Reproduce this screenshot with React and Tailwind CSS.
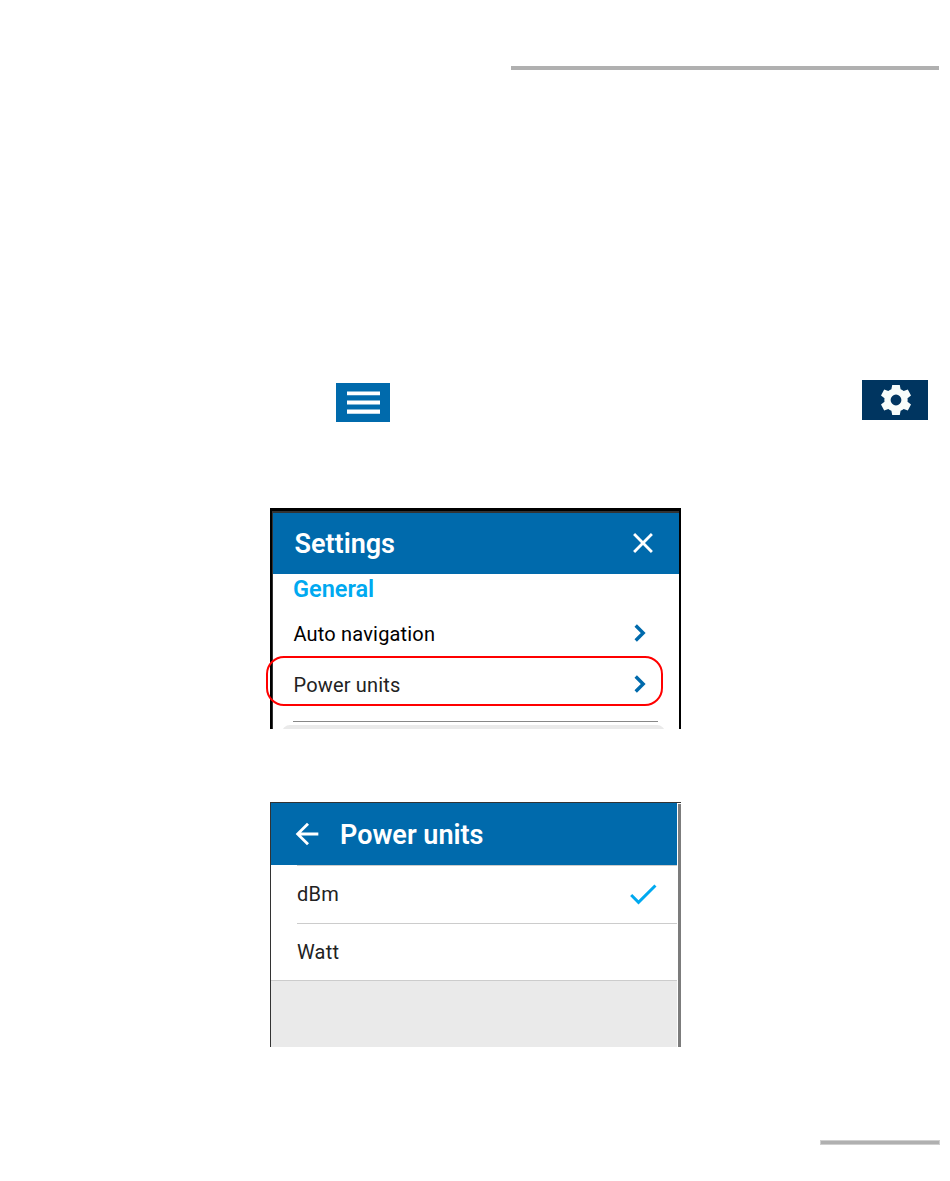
import { MdArrowBack, MdCheck, MdClose } from 'react-icons/md';

function MenuButton() {
  return (
    <button className="flex h-[39px] w-[54px] items-center justify-center bg-[#006aac]" aria-label="Menu">
      <svg className="h-[23px] w-[33px]" viewBox="0 0 33 23" fill="#fff">
        <path d="M0 .5h33v3.8H0zM0 9.6h33v3.8H0zM0 18.4h33v4.4H0z" />
      </svg>
    </button>
  );
}

function GearIcon() {
  return (
    <svg className="ml-px h-[30px] w-[30px]" viewBox="-15 -15 30 30" fill="currentColor">
      <path
        fillRule="evenodd"
        d="M-3.8 -15H3.8L4.6 -10.7Q6.3 -10 7.7 -8.9L11.8 -10.5L15 -4.6L11.5 -1.8Q11.8 0 11.5 1.8L15 4.6L11.8 10.5L7.7 8.9Q6.3 10 4.6 10.7L3.8 15H-3.8L-4.6 10.7Q-6.3 10 -7.7 8.9L-11.8 10.5L-15 4.6L-11.5 1.8Q-11.8 0 -11.5 -1.8L-15 -4.6L-11.8 -10.5L-7.7 -8.9Q-6.3 -10 -4.6 -10.7ZM0 -5.4A5.4 5.4 0 1 0 0 5.4A5.4 5.4 0 1 0 0 -5.4Z"
      />
    </svg>
  );
}

function ChevronIcon() {
  return (
    <svg className="mr-[11px] mb-[2px] h-[18px] w-3" viewBox="0 0 12 18" fill="none" stroke="#006aac" strokeWidth="3.4">
      <path d="M1.7 1.5 9.2 9l-7.5 7.5" />
    </svg>
  );
}

function SettingsRow({ label, className }) {
  return (
    <div className={`flex items-center justify-between ${className}`}>
      <span>{label}</span>
      <ChevronIcon />
    </div>
  );
}

function SettingsPanel() {
  return (
    <section className="relative ml-[270px] mt-[86px] h-[221px] w-[411px] border-x-2 border-t-3 border-black">
      <div className="h-full overflow-hidden border-l border-t-2 border-[#333]">
        <header className="flex h-[61px] items-center justify-between bg-[#006aac] pl-[21.5px] pr-[19.5px] text-white">
          <h1 className="text-[27px] font-semibold leading-8">Settings</h1>
          <MdClose className="mb-px h-[34px] w-[34px]" />
        </header>
        <h2 className="pl-5 text-[23.5px] font-semibold leading-[30px] text-[#00a9f0]">General</h2>
        <div className="pl-[20.5px] pr-[22px] text-[20px] tracking-[0.18px]">
          <SettingsRow label="Auto navigation" className="h-[60px] text-black" />
          <SettingsRow label="Power units" className="h-[42px] text-[#222]" />
        </div>
        <div className="ml-5 mt-[15px] h-px w-[365px] bg-[#888]"></div>
        <div className="ml-[9px] mt-[3px] h-3 w-[383px] rounded-t-[8px] bg-[#eaeaea]"></div>
      </div>
      {/* callout around the selected row */}
      <div className="absolute -left-[6px] top-[145px] h-[50px] w-[397px] rounded-[18px] border-2 border-[#f00]"></div>
    </section>
  );
}

function PowerUnitsPanel() {
  return (
    <section className="ml-[270px] mt-[73px] h-[245px] w-[411px] border-l border-t border-[#333]">
      <div className="flex h-full">
        <div className="flex w-[406px] flex-col">
          <header className="flex h-[62px] shrink-0 items-center bg-[#006aac] pl-[19px] text-white">
            <MdArrowBack className="h-[34px] w-[34px]" />
            <h1 className="ml-[16px] pt-[2px] text-[27px] font-semibold leading-8">Power units</h1>
          </header>
          <ul className="pl-[26px] text-[20px] tracking-[0.2px] text-[#222]">
            <li className="flex h-[58px] items-center justify-between border-t border-[#ccc] pr-[16px] pb-[2px]">
              <span>dBm</span>
              <MdCheck className="h-9 w-9 text-[#00a9f0]" />
            </li>
            <li className="flex h-[57px] items-center border-t border-[#ccc]">Watt</li>
          </ul>
          <div className="grow border-t border-[#ccc] bg-[#eaeaea]"></div>
        </div>
        <div className="ml-px mt-px w-[3px] bg-[#7c7c7c]"></div>
      </div>
    </section>
  );
}

function App() {
  return (
    <main className="h-[1181px] w-[950px] overflow-hidden bg-white pt-[66px] font-['Roboto',sans-serif]">
      <div className="ml-[511px] h-1 w-[428px] bg-[#b0b0b0]"></div>
      <div className="mt-[310px] flex h-[42px] items-start justify-between pl-[336px] pr-[22px]">
        <div className="pt-[3px]">
          <MenuButton />
        </div>
        <button className="flex h-10 w-[66px] items-center justify-center bg-[#003560] text-[#f8fcfa]" aria-label="Settings">
          <GearIcon />
        </button>
      </div>
      <SettingsPanel />
      <PowerUnitsPanel />
      <div className="ml-[820px] mt-[93px] h-[5px] w-[120px] border border-[#cfcfcf] bg-[#b0b0b0]"></div>
    </main>
  );
}

export default App;
